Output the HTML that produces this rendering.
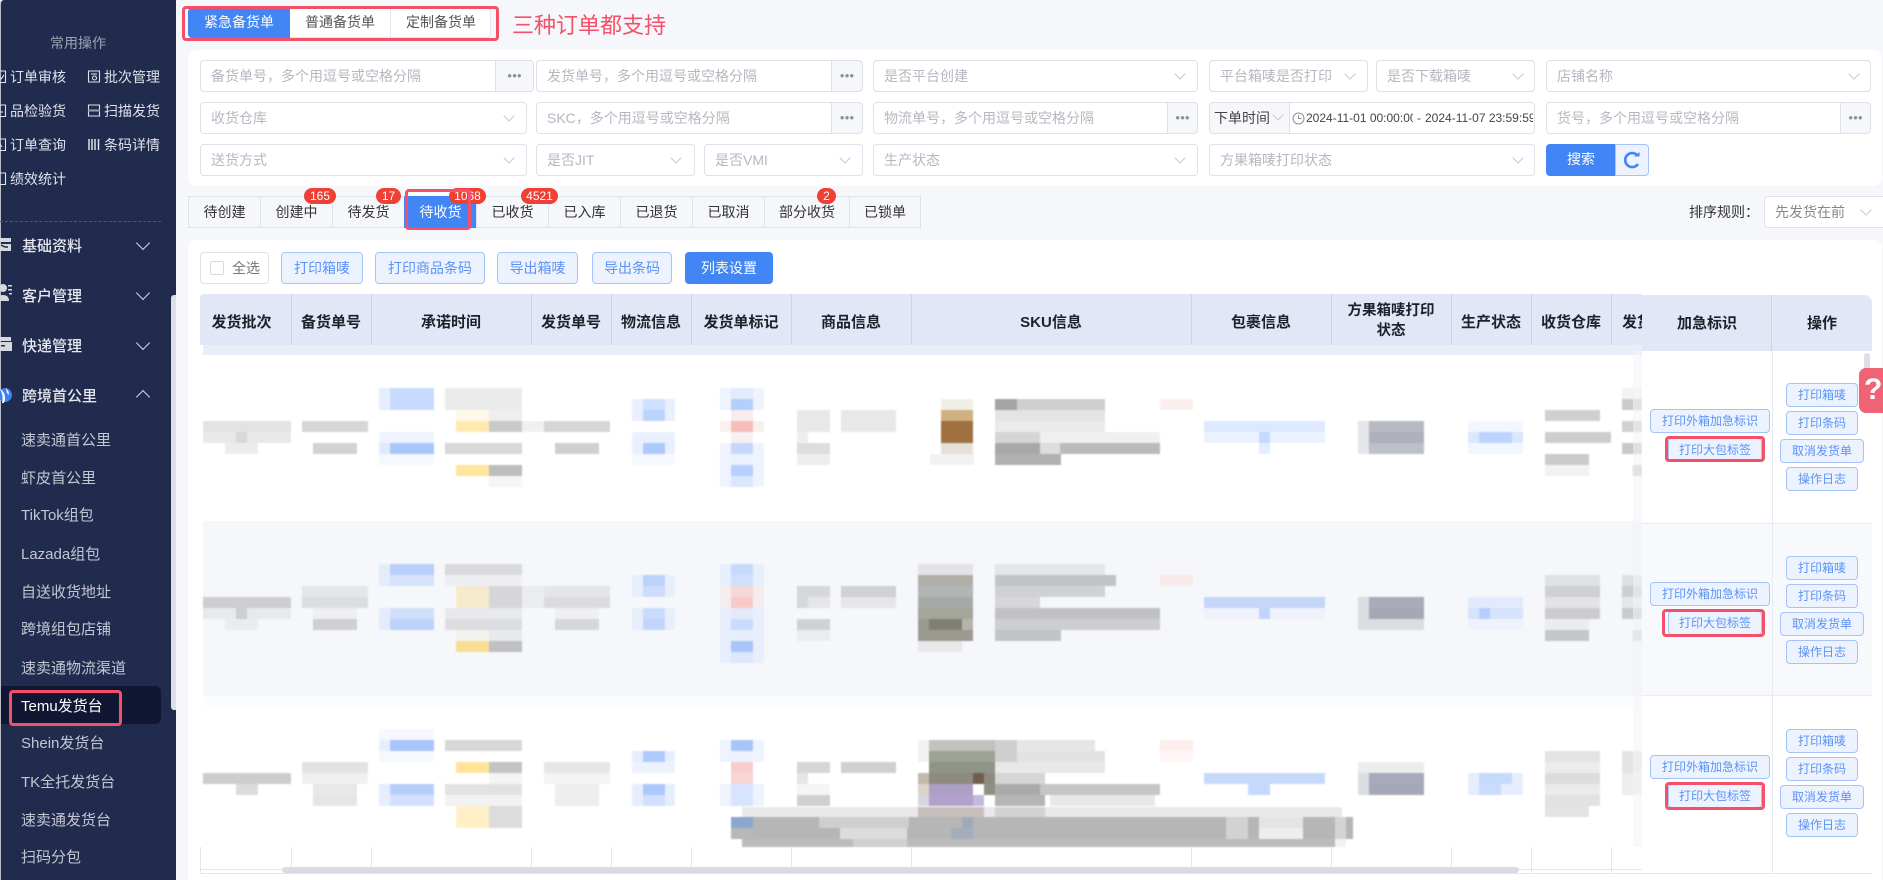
<!DOCTYPE html>
<html lang="zh-CN"><head><meta charset="utf-8"><title>Temu发货台</title>
<style>
*{box-sizing:border-box}
html,body{margin:0;padding:0;width:1883px;height:880px;overflow:hidden;background:#f5f7fb;font-family:"Liberation Sans","Noto Sans CJK SC",sans-serif;font-size:14px;color:#333}
.a,.i,.d,.b,.t,.h,.s,.m,.badge,.red,.ph{position:absolute}
.s{left:21px;width:140px;height:30px;line-height:30px;font-size:15px;color:#c3c7d2;white-space:nowrap}
.m{left:22px;height:24px;line-height:24px;font-size:15px;color:#e6e8ee;white-space:nowrap;font-weight:500}
.q{position:absolute;height:22px;line-height:22px;font-size:14px;color:#dfe2ea;white-space:nowrap}
.ch{position:absolute;width:8px;height:8px;border-right:1px solid #c5c8cf;border-bottom:1px solid #c5c8cf;transform:rotate(45deg)}
.mch{position:absolute;left:138px;width:10px;height:10px;border-right:1.4px solid #d6d9e2;border-bottom:1.4px solid #d6d9e2;transform:rotate(45deg)}
.i{height:32px;background:#fff;border:1px solid #dfe1ea;border-radius:4px;line-height:30px;padding-left:10px;color:#b5b8c0;white-space:nowrap;overflow:hidden}
.d{height:32px;width:32px;background:#f5f7fb;border:1px solid #dfe1ea;border-radius:0 4px 4px 0;text-align:center;line-height:29px;color:#8b909a;font-size:8px;letter-spacing:0}
.t{top:196px;height:32px;width:73px;background:#f5f7fb;border:1px solid #dfe1ea;line-height:31px;text-align:center;color:#333}
.badge{top:188px;height:16px;line-height:16px;border-radius:8px;background:#ee4035;color:#fff;font-size:12px;text-align:center;font-weight:500}
.b{text-align:center;background:#ecf2fe;border:1px solid #a5c3f9;border-radius:4px;color:#5b94f6;white-space:nowrap}
.tb{top:252px;height:32px;line-height:30px;font-size:14px}
.r{height:24px;line-height:22px;font-size:12px}
.h{top:297px;height:51px;line-height:51px;font-size:15px;font-weight:700;color:#1d2129;text-align:center;white-space:nowrap}
.sep{position:absolute;width:1px;background:#ccd3e6}
.red{border:3px solid #f4506a;border-radius:4px}
.cl{position:absolute;top:847px;height:26px;width:1px;background:#e4e6ed}
</style></head><body>

<!-- main panels -->
<div class="a" style="left:188px;top:50px;width:1694px;height:136px;background:#fff;border-radius:8px"></div>
<div class="a" style="left:188px;top:240px;width:1694px;height:640px;background:#fff;border-radius:8px 8px 0 0"></div>

<!-- order type tabs -->
<div class="a" style="left:188px;top:8px;width:303px;height:30px;background:#fff;border:1px solid #e3e6ee;border-radius:4px"></div>
<div class="a" style="left:188px;top:8px;width:102px;height:30px;background:#4285f4;color:#fff;text-align:center;line-height:29px;border-radius:4px 0 0 4px">紧急备货单</div>
<div class="a" style="left:290px;top:8px;width:101px;height:30px;text-align:center;line-height:29px;border-right:1px solid #e3e6ee;color:#555">普通备货单</div>
<div class="a" style="left:391px;top:8px;width:100px;height:30px;text-align:center;line-height:29px;color:#555">定制备货单</div>
<div class="red" style="left:182px;top:6px;width:317px;height:35px"></div>
<div class="a" style="left:512px;top:10px;height:32px;line-height:32px;font-size:22px;color:#f4506a;white-space:nowrap">三种订单都支持</div>

<!-- filters row 1 -->
<div class="i" style="left:200px;top:60px;width:296px;border-radius:4px 0 0 4px">备货单号，多个用逗号或空格分隔</div><div class="d" style="left:495px;top:60px;width:39px">●●●</div>
<div class="i" style="left:536px;top:60px;width:296px;border-radius:4px 0 0 4px">发货单号，多个用逗号或空格分隔</div><div class="d" style="left:831px;top:60px">●●●</div>
<div class="i" style="left:873px;top:60px;width:325px">是否平台创建</div><span class="ch" style="left:1176px;top:70px"></span>
<div class="i" style="left:1209px;top:60px;width:159px">平台箱唛是否打印</div><span class="ch" style="left:1346px;top:70px"></span>
<div class="i" style="left:1376px;top:60px;width:159px">是否下载箱唛</div><span class="ch" style="left:1514px;top:70px"></span>
<div class="i" style="left:1546px;top:60px;width:325px">店铺名称</div><span class="ch" style="left:1850px;top:70px"></span>
<!-- filters row 2 -->
<div class="i" style="left:200px;top:102px;width:327px">收货仓库</div><span class="ch" style="left:505px;top:112px"></span>
<div class="i" style="left:536px;top:102px;width:296px;border-radius:4px 0 0 4px">SKC，多个用逗号或空格分隔</div><div class="d" style="left:831px;top:102px">●●●</div>
<div class="i" style="left:873px;top:102px;width:295px;border-radius:4px 0 0 4px">物流单号，多个用逗号或空格分隔</div><div class="d" style="left:1167px;top:102px;width:31px">●●●</div>
<div class="i" style="left:1209px;top:102px;width:326px"></div>
<div class="a" style="left:1209px;top:102px;width:81px;height:32px;background:#f5f7fb;border:1px solid #dfe1ea;border-radius:4px 0 0 4px;line-height:30px;padding-left:4px;color:#444;white-space:nowrap">下单时间</div><span class="ch" style="left:1274px;top:111px"></span>
<svg class="a" style="left:1292px;top:112px" width="13" height="13" viewBox="0 0 13 13" fill="none" stroke="#8c8f96"><circle cx="6.5" cy="6.5" r="5.5"/><path d="M6.5 3v3.5h3"/></svg>
<div class="a" style="left:1306px;top:102px;width:107px;height:32px;line-height:32px;font-size:12px;color:#444;overflow:hidden;white-space:nowrap">2024-11-01 00:00:00</div>
<div class="a" style="left:1417px;top:102px;height:32px;line-height:33px;font-size:12px;color:#444">-</div>
<div class="a" style="left:1425px;top:102px;width:108px;height:32px;line-height:32px;font-size:12px;color:#444;overflow:hidden;white-space:nowrap">2024-11-07 23:59:59</div>
<div class="i" style="left:1546px;top:102px;width:295px;border-radius:4px 0 0 4px">货号，多个用逗号或空格分隔</div><div class="d" style="left:1840px;top:102px;width:31px">●●●</div>
<!-- filters row 3 -->
<div class="i" style="left:200px;top:144px;width:327px">送货方式</div><span class="ch" style="left:505px;top:154px"></span>
<div class="i" style="left:536px;top:144px;width:159px">是否JIT</div><span class="ch" style="left:672px;top:154px"></span>
<div class="i" style="left:704px;top:144px;width:159px">是否VMI</div><span class="ch" style="left:841px;top:154px"></span>
<div class="i" style="left:873px;top:144px;width:325px">生产状态</div><span class="ch" style="left:1176px;top:154px"></span>
<div class="i" style="left:1209px;top:144px;width:326px">方果箱唛打印状态</div><span class="ch" style="left:1514px;top:154px"></span>
<div class="a" style="left:1546px;top:144px;width:70px;height:32px;background:#4285f4;color:#fff;text-align:center;line-height:31px;border-radius:4px 0 0 4px">搜索</div>
<div class="a" style="left:1615px;top:144px;width:34px;height:32px;background:#ecf2fe;border:1px solid #a5c3f9;border-radius:0 4px 4px 0"></div>
<svg class="a" style="left:1623px;top:151px" width="18" height="18" viewBox="0 0 18 18" fill="none"><path d="M14.5 4.500A7 7 0 1 0 15 13" stroke="#4285f4" stroke-width="2.600"/><path d="M11 5.500h5.500V1z" fill="#4285f4"/></svg>

<!-- status tabs -->
<div class="a" style="left:405px;top:190px;width:66px;height:7px;background:#fff"></div>
<div class="t" style="left:188px">待创建</div>
<div class="t" style="left:260px">创建中</div>
<div class="t" style="left:332px">待发货</div>
<div class="t" style="left:404px;background:#4285f4;color:#fff;border-color:#4285f4">待收货</div>
<div class="t" style="left:476px">已收货</div>
<div class="t" style="left:548px">已入库</div>
<div class="t" style="left:620px">已退货</div>
<div class="t" style="left:692px">已取消</div>
<div class="t" style="left:764px;width:86px">部分收货</div>
<div class="t" style="left:849px;width:72px">已锁单</div>
<div class="badge" style="left:304px;width:32px">165</div>
<div class="badge" style="left:376px;width:25px">17</div>
<div class="badge" style="left:449px;width:37px">1068</div>
<div class="badge" style="left:521px;width:37px">4521</div>
<div class="badge" style="left:817px;width:19px">2</div>
<div class="red" style="left:405px;top:189px;width:66px;height:41px"></div>
<div class="a" style="left:1689px;top:200px;height:24px;line-height:24px;font-size:14px;color:#333;white-space:nowrap">排序规则：</div>
<div class="i" style="left:1764px;top:196px;width:125px;color:#888">先发货在前</div><span class="ch" style="left:1862px;top:206px"></span>

<!-- toolbar -->
<div class="a" style="left:200px;top:252px;width:69px;height:32px;background:#fff;border:1px solid #dfe1ea;border-radius:4px"></div>
<div class="a" style="left:210px;top:261px;width:14px;height:14px;background:#fff;border:1px solid #d8dae2;border-radius:2px"></div>
<div class="a" style="left:232px;top:252px;height:32px;line-height:32px;color:#777">全选</div>
<div class="b tb" style="left:281px;width:82px">打印箱唛</div>
<div class="b tb" style="left:375px;width:110px">打印商品条码</div>
<div class="b tb" style="left:497px;width:81px">导出箱唛</div>
<div class="b tb" style="left:592px;width:80px">导出条码</div>
<div class="b tb" style="left:685px;width:88px;background:#4285f4;border-color:#4285f4;color:#fff">列表设置</div>

<!-- table header -->
<div class="a" style="left:200px;top:294px;width:1442px;height:51px;background:#e1e7f7;border-radius:4px 0 0 0"></div>
<div class="a" style="left:203px;top:345px;width:1439px;height:10px;background:#e9eef9"></div>
<div class="a" style="left:203px;top:521px;width:1439px;height:175px;background:#f5f7fb"></div>
<div class="a" style="left:203px;top:696px;width:1439px;height:10px;background:#fbfcfe"></div>
<div class="sep" style="left:291px;top:294px;height:51px"></div><div class="sep" style="left:371px;top:294px;height:51px"></div><div class="sep" style="left:531px;top:294px;height:51px"></div><div class="sep" style="left:611px;top:294px;height:51px"></div><div class="sep" style="left:691px;top:294px;height:51px"></div><div class="sep" style="left:791px;top:294px;height:51px"></div><div class="sep" style="left:911px;top:294px;height:51px"></div><div class="sep" style="left:1191px;top:294px;height:51px"></div><div class="sep" style="left:1331px;top:294px;height:51px"></div><div class="sep" style="left:1451px;top:294px;height:51px"></div><div class="sep" style="left:1531px;top:294px;height:51px"></div><div class="sep" style="left:1611px;top:294px;height:51px"></div>
<div class="h" style="left:200px;width:83px">发货批次</div>
<div class="h" style="left:291px;width:80px">备货单号</div>
<div class="h" style="left:371px;width:160px">承诺时间</div>
<div class="h" style="left:531px;width:80px">发货单号</div>
<div class="h" style="left:611px;width:80px">物流信息</div>
<div class="h" style="left:691px;width:100px">发货单标记</div>
<div class="h" style="left:791px;width:120px">商品信息</div>
<div class="h" style="left:911px;width:280px">SKU信息</div>
<div class="h" style="left:1191px;width:140px">包裹信息</div>
<div class="h" style="left:1331px;width:120px;line-height:20px;padding-top:4px;white-space:normal;font-size:14.500px">方果箱唛打印<br>状态</div>
<div class="h" style="left:1451px;width:80px">生产状态</div>
<div class="h" style="left:1531px;width:80px">收货仓库</div>
<div class="h" style="left:1622px;width:20px;overflow:hidden;text-align:left">发货</div>

<!-- blurred table content -->
<svg class="a" style="left:0;top:0;filter:blur(.7px)" width="1883" height="880" viewBox="0 0 1883 880" shape-rendering="crispEdges">
<g id="r1">
<path fill="#e2e3e4" d="M203 421h88v11h-88z"/><path fill="#e9e9e9" d="M203 432h88v11h-88z"/><path fill="#d8d8d8" d="M236 432h11v11h-11z"/><path fill="#ececec" d="M225 443h33v11h-33z"/>
<path fill="#d5d6d7" d="M302 421h66v11h-66z"/><path fill="#d2d2d2" d="M313 443h44v11h-44z"/>
<path fill="#e6eefe" d="M379 388h11v22h-11z"/><path fill="#c8daff" d="M390 388h44v22h-44z"/><path fill="#eef3fe" d="M379 432h55v11h-55z"/><path fill="#dfe9fd" d="M379 443h11v11h-11z"/><path fill="#a9c6fa" d="M390 443h44v11h-44z"/><path fill="#f5f8ff" d="M379 454h55v11h-55z"/>
<path fill="#ebebeb" d="M445 388h77v22h-77z"/><path fill="#fff9ea" d="M456 410h33v11h-33z"/><path fill="#eeeeee" d="M489 410h33v11h-33z"/><path fill="#ffe9b0" d="M456 421h33v11h-33z"/><path fill="#c9c9c9" d="M489 421h33v11h-33z"/><path fill="#f0f0f0" d="M522 421h22v11h-22z"/><path fill="#d8d8d8" d="M445 443h77v11h-77z"/><path fill="#ffe69e" d="M456 465h33v11h-33z"/><path fill="#bdbdbd" d="M489 465h33v11h-33z"/><path fill="#f5f5f5" d="M489 476h33v11h-33z"/>
<path fill="#d6d6d6" d="M544 421h66v11h-66z"/><path fill="#cfcfcf" d="M555 443h44v11h-44z"/>
<path fill="#e8effe" d="M632 399h43v22h-43zM632 443h43v11h-43z"/><path fill="#d0e0ff" d="M643 399h22v11h-22z"/><path fill="#bcd4fd" d="M643 410h22v11h-22z"/><path fill="#e9f0fe" d="M632 432h43v11h-43z"/><path fill="#adc9fb" d="M643 443h22v11h-22z"/><path fill="#f5f8ff" d="M632 454h43v11h-43z"/>
<path fill="#eef3fe" d="M720 388h44v22h-44zM720 443h44v44h-44z"/><path fill="#e2ebfd" d="M731 388h22v11h-22z"/><path fill="#b5cefa" d="M731 399h22v11h-22z"/><path fill="#f8ecef" d="M731 410h22v11h-22z"/><path fill="#fbf0f0" d="M720 421h44v11h-44z"/><path fill="#f6bdb9" d="M731 421h22v11h-22z"/><path fill="#f7f0f3" d="M731 432h22v11h-22z"/><path fill="#c5d8fb" d="M731 443h22v11h-22z"/><path fill="#eaf2fe" d="M731 454h22v11h-22z"/><path fill="#b7cffb" d="M731 465h22v11h-22z"/><path fill="#dae6fe" d="M731 476h22v11h-22z"/>
<path fill="#e8e8e8" d="M797 410h33v22h-33zM841 410h55v22h-55z"/><path fill="#eeeeee" d="M797 432h11v11h-11zM797 454h33v11h-33z"/><path fill="#dddddd" d="M797 443h33v11h-33z"/>
<path fill="#f0efe6" d="M941 399h32v11h-32z"/><path fill="#d0b080" d="M941 410h32v11h-32z"/><path fill="#a07040" d="M941 421h32v22h-32z"/><path fill="#e5e0da" d="M941 443h32v11h-32z"/><path fill="#f2f2f0" d="M930 454h44v11h-44z"/>
<path fill="#cfcfcf" d="M995 399h110v11h-110z"/><path fill="#a4a4a4" d="M995 399h22v11h-22z"/><path fill="#e4e4e4" d="M995 410h110v11h-110z"/><path fill="#ebebeb" d="M995 421h110v11h-110z"/><path fill="#d5d5d5" d="M995 432h45v11h-45z"/><path fill="#f0f0f0" d="M1040 432h120v11h-120z"/><path fill="#a8a8a8" d="M995 443h45v11h-45z"/><path fill="#bbbbbb" d="M1060 443h100v11h-100z"/><path fill="#dddddd" d="M1040 443h20v11h-20z"/><path fill="#b0b0b0" d="M995 454h66v11h-66z"/>
<path fill="#fdeeee" d="M1160 399h33v11h-33z"/>
<path fill="#dde9ff" d="M1204 421h121v11h-121z"/><path fill="#eaf2ff" d="M1204 432h121v11h-121z"/><path fill="#c5d9fd" d="M1259 432h11v11h-11z"/><path fill="#e3edfe" d="M1259 443h11v11h-11z"/>
<path fill="#b7bac3" d="M1369 421h55v11h-55z"/><path fill="#adb0bd" d="M1369 432h55v11h-55z"/><path fill="#bcc0c8" d="M1369 443h55v11h-55z"/><path fill="#e4e5e8" d="M1358 421h11v33h-11z"/>
<path fill="#f2f6fe" d="M1468 421h55v11h-55zM1468 443h55v11h-55z"/><path fill="#dbe7fd" d="M1468 432h55v11h-55z"/><path fill="#bdd3fb" d="M1479 432h33v11h-33z"/>
<path fill="#cfcfcf" d="M1545 410h55v11h-55z"/><path fill="#cdcdcd" d="M1545 432h66v11h-66z"/><path fill="#cccccc" d="M1545 454h44v11h-44z"/><path fill="#f2f2f2" d="M1545 465h44v11h-44z"/>
<path fill="#f3f3f3" d="M1622 388h20v11h-20z"/><path fill="#cccccc" d="M1622 399h20v11h-20z"/><path fill="#d0d0d0" d="M1622 421h20v11h-20z"/><path fill="#c8c8c8" d="M1622 443h20v11h-20z"/><path fill="#cccccc" d="M1633 465h9v11h-9z"/>
</g>
<g id="r2">
<path fill="#cdced2" d="M203 597h88v11h-88z"/><path fill="#e8e9ec" d="M203 608h88v11h-88z"/><path fill="#ccced2" d="M236 608h11v11h-11z"/><path fill="#ebecef" d="M225 619h33v11h-33z"/>
<path fill="#e5e6ea" d="M302 586h66v11h-66z"/><path fill="#dcdde1" d="M302 597h66v11h-66z"/><path fill="#eeeff2" d="M313 608h44v11h-44z"/><path fill="#cfd0d4" d="M313 619h44v11h-44z"/>
<path fill="#e4ecfb" d="M379 564h11v22h-11zM379 608h11v22h-11z"/><path fill="#b8cffa" d="M390 564h44v11h-44z"/><path fill="#d6e3fb" d="M390 575h44v11h-44z"/><path fill="#d0dffa" d="M390 608h44v11h-44z"/><path fill="#bcd2fb" d="M390 619h44v11h-44z"/>
<path fill="#d8d9dd" d="M445 564h77v11h-77z"/><path fill="#eeeff2" d="M445 575h77v11h-77z"/><path fill="#f5ebcc" d="M456 586h33v22h-33z"/><path fill="#d5d6da" d="M489 586h33v22h-33z"/><path fill="#ebecef" d="M522 586h22v22h-22z"/><path fill="#e8e9ec" d="M445 608h77v11h-77z"/><path fill="#dcdde1" d="M445 619h77v11h-77z"/><path fill="#f2f3ee" d="M456 630h33v11h-33z"/><path fill="#e8e9ec" d="M489 630h33v11h-33z"/><path fill="#f8dd93" d="M456 641h33v11h-33z"/><path fill="#bfc0c4" d="M489 641h33v11h-33z"/>
<path fill="#e4e5e9" d="M544 586h66v11h-66z"/><path fill="#dadbdf" d="M544 597h66v11h-66z"/><path fill="#eeeff2" d="M555 608h44v11h-44z"/><path fill="#d6d7db" d="M555 619h44v11h-44z"/>
<path fill="#e8effc" d="M632 575h43v22h-43zM632 608h43v22h-43z"/><path fill="#bcd2fb" d="M643 575h22v11h-22z"/><path fill="#cddcfb" d="M643 586h22v11h-22z"/><path fill="#cadcfb" d="M643 608h22v11h-22z"/><path fill="#c2d6fb" d="M643 619h22v11h-22z"/>
<path fill="#e8eefb" d="M720 564h44v22h-44zM720 608h44v55h-44z"/><path fill="#f5ecee" d="M720 586h44v22h-44z"/><path fill="#c8dafb" d="M731 564h22v11h-22z"/><path fill="#d0dffb" d="M731 575h22v11h-22z"/><path fill="#f6d7d7" d="M731 586h22v11h-22z"/><path fill="#f7c9c9" d="M731 597h22v11h-22z"/><path fill="#e4eafa" d="M731 608h22v11h-22z"/><path fill="#cadcfb" d="M731 619h22v11h-22z"/><path fill="#e6eefb" d="M731 630h22v11h-22z"/><path fill="#a9c5fa" d="M731 641h22v11h-22z"/><path fill="#dce7fb" d="M731 652h22v11h-22z"/>
<path fill="#d6d7db" d="M797 586h33v11h-33zM797 597h11v11h-11z"/><path fill="#e5e6e9" d="M808 597h22v11h-22z"/><path fill="#d0d1d5" d="M841 586h55v11h-55z"/><path fill="#e5e6e9" d="M841 597h55v11h-55z"/><path fill="#d0d1d5" d="M797 619h33v11h-33z"/><path fill="#ebecef" d="M797 630h33v11h-33z"/>
<path fill="#e2e3e6" d="M918 564h55v11h-55z"/><path fill="#b0afa8" d="M918 575h55v11h-55z"/><path fill="#b0b5b5" d="M918 586h55v11h-55z"/><path fill="#a6aaa6" d="M918 597h55v11h-55z"/><path fill="#a5a59a" d="M918 608h55v11h-55z"/><path fill="#7f7f75" d="M929 619h33v11h-33z"/><path fill="#9b9a90" d="M918 619h11v22h-11zM929 630h44v11h-44z"/><path fill="#b5b3aa" d="M962 619h11v11h-11z"/><path fill="#e8e8ea" d="M918 641h44v11h-44z"/>
<path fill="#e5e6e8" d="M995 564h110v11h-110z"/><path fill="#c2c3c8" d="M995 575h121v11h-121z"/><path fill="#d0d1d5" d="M995 586h110v11h-110z"/><path fill="#d6d7db" d="M995 597h45v11h-45z"/><path fill="#c0c1c5" d="M995 608h165v11h-165z"/><path fill="#cdced2" d="M995 619h165v11h-165z"/><path fill="#c2c3c7" d="M995 630h66v11h-66z"/>
<path fill="#f8e9ea" d="M1160 575h33v11h-33z"/>
<path fill="#c5d6f9" d="M1204 597h121v11h-121z"/><path fill="#eef2fb" d="M1204 608h121v11h-121z"/><path fill="#c0d4fb" d="M1259 608h11v11h-11z"/>
<path fill="#dcdde1" d="M1358 597h11v22h-11zM1358 619h66v11h-66z"/><path fill="#a7abba" d="M1369 597h55v11h-55z"/><path fill="#a5a8b6" d="M1369 608h55v11h-55z"/>
<path fill="#e2ebfb" d="M1468 597h55v11h-55z"/><path fill="#d6e3fb" d="M1468 608h55v11h-55z"/><path fill="#b6cefb" d="M1479 608h11v11h-11z"/><path fill="#eef2fb" d="M1468 619h55v11h-55z"/>
<path fill="#dfe1e4" d="M1545 575h55v11h-55z"/><path fill="#cfd0d4" d="M1545 586h55v11h-55z"/><path fill="#e2e3e7" d="M1545 597h55v11h-55z"/><path fill="#cbccd0" d="M1545 608h55v11h-55z"/><path fill="#ebecef" d="M1545 619h44v11h-44z"/><path fill="#c5c6ca" d="M1545 630h44v11h-44z"/>
<path fill="#dfe0e3" d="M1622 575h20v11h-20z"/><path fill="#ccced1" d="M1622 586h20v11h-20z"/><path fill="#e5e6e9" d="M1622 597h20v11h-20z"/><path fill="#c9cacf" d="M1622 608h20v11h-20z"/><path fill="#d4d5d8" d="M1633 630h9v11h-9z"/>
</g>
<g id="r3">
<path fill="#cdcdcd" d="M203 773h88v11h-88z"/><path fill="#dcdcdc" d="M236 784h22v11h-22z"/>
<path fill="#e2e2e2" d="M302 762h66v11h-66z"/><path fill="#f0f0f0" d="M302 773h66v11h-66z"/><path fill="#e8e8e8" d="M313 784h44v11h-44z"/><path fill="#e5e5e5" d="M313 795h44v11h-44z"/>
<path fill="#f5f8ff" d="M379 729h55v11h-55zM379 751h55v11h-55z"/><path fill="#a9c5fa" d="M390 740h44v11h-44z"/><path fill="#e6eefd" d="M379 740h11v11h-11zM379 784h11v22h-11z"/><path fill="#b6cffa" d="M390 784h44v11h-44z"/><path fill="#d3e1fe" d="M390 795h44v11h-44z"/>
<path fill="#d8d8d8" d="M445 740h77v11h-77z"/><path fill="#ffe49a" d="M456 762h33v11h-33z"/><path fill="#c4c4c4" d="M489 762h33v11h-33z"/><path fill="#e6e6e6" d="M544 762h66v11h-66z"/><path fill="#f4f4f4" d="M489 773h33v11h-33zM544 773h66v11h-66z"/><path fill="#e2e2e2" d="M445 784h77v11h-77z"/><path fill="#f2f2f2" d="M445 795h77v11h-77z"/><path fill="#fff0c8" d="M456 806h33v22h-33z"/><path fill="#dcdcdc" d="M489 806h33v22h-33z"/>
<path fill="#eeeeee" d="M555 784h44v22h-44z"/>
<path fill="#e6eefd" d="M632 751h43v11h-43zM632 784h43v22h-43z"/><path fill="#b0cbfb" d="M643 751h22v11h-22z"/><path fill="#edf2fe" d="M632 762h43v11h-43z"/><path fill="#acc8fb" d="M643 784h22v11h-22z"/><path fill="#d0e0fe" d="M643 795h22v11h-22z"/>
<path fill="#eef3fe" d="M720 740h44v22h-44zM720 784h44v22h-44z"/><path fill="#a8c5fa" d="M731 740h22v11h-22z"/><path fill="#edf2fe" d="M731 751h22v11h-22z"/><path fill="#f9cccc" d="M731 762h22v11h-22z"/><path fill="#f9d6d6" d="M731 773h22v11h-22z"/><path fill="#d6e4fd" d="M731 784h22v22h-22z"/>
<path fill="#d6d6d6" d="M797 762h33v11h-33z"/><path fill="#d0d0d0" d="M841 762h55v11h-55z"/><path fill="#e5e5e5" d="M797 773h11v11h-11z"/><path fill="#f5f5f5" d="M797 784h33v11h-33z"/><path fill="#d0d0d0" d="M797 795h33v11h-33z"/>
<path fill="#f2f2ee" d="M918 740h11v22h-11z"/><path fill="#bfc3bb" d="M929 740h66v11h-66z"/><path fill="#9ca295" d="M929 751h66v11h-66z"/><path fill="#8f9488" d="M929 762h66v11h-66z"/><path fill="#8f8a80" d="M929 773h66v11h-66z"/><path fill="#c2b8ac" d="M918 773h11v11h-11z"/><path fill="#705d50" d="M973 773h11v11h-11z"/><path fill="#ddd3c7" d="M918 784h11v11h-11z"/><path fill="#ab9fc8" d="M929 784h44v11h-44z"/><path fill="#8f9080" d="M984 784h11v11h-11z"/><path fill="#d6d5e0" d="M918 795h11v11h-11z"/><path fill="#b3a0cc" d="M929 795h44v11h-44z"/><path fill="#c0bae0" d="M973 795h11v11h-11z"/>
<path fill="#cfcfcf" d="M995 740h22v22h-22z"/><path fill="#e6e6e6" d="M1017 740h78v11h-78z"/><path fill="#e2e2e2" d="M1017 751h88v11h-88z"/><path fill="#e8e8e8" d="M995 762h110v11h-110z"/><path fill="#d5d5d5" d="M995 773h50v11h-50z"/><path fill="#aaaaaa" d="M995 784h45v11h-45z"/><path fill="#c5c5c5" d="M1040 784h120v11h-120z"/><path fill="#b5b5b5" d="M995 795h50v11h-50z"/><path fill="#e8e8e8" d="M1050 795h105v11h-105z"/>
<path fill="#fdeeec" d="M1160 740h33v11h-33z"/><path fill="#fff5f4" d="M1160 751h33v11h-33z"/>
<path fill="#c6d9fb" d="M1204 773h121v11h-121z"/><path fill="#c5d9fd" d="M1248 784h22v11h-22z"/>
<path fill="#ebecee" d="M1358 762h66v11h-66z"/><path fill="#a6aabb" d="M1369 773h55v11h-55z"/><path fill="#a4a8b8" d="M1369 784h55v11h-55z"/><path fill="#dcdde1" d="M1358 773h11v22h-11z"/>
<path fill="#e6eefd" d="M1468 773h55v22h-55z"/><path fill="#c6dafd" d="M1479 773h33v11h-33z"/><path fill="#cadcfd" d="M1479 784h22v11h-22z"/>
<path fill="#e3e3e3" d="M1545 751h55v11h-55z"/><path fill="#ececec" d="M1545 762h55v11h-55z"/><path fill="#dcdcdc" d="M1545 773h55v11h-55z"/><path fill="#ebebeb" d="M1545 784h55v11h-55z"/><path fill="#e2e2e2" d="M1545 795h55v11h-55z"/><path fill="#e3e3e3" d="M1545 806h44v11h-44z"/>
<path fill="#e4e4e4" d="M1622 751h20v22h-20z"/><path fill="#eeeeee" d="M1622 773h20v22h-20z"/>
</g>
<!-- bottom overlay tooltip -->
<path fill="#e9e9e9" d="M742 807h600v10h-600z"/>
<path fill="#c6bfbd" d="M918 807h66v10h-66z"/><path fill="#d3d3d3" d="M995 807h50v10h-50z"/>
<path fill="#8ba7cf" d="M731 817h22v11h-22z"/>
<path fill="#b6b6b6" d="M753 817h600v22h-600z"/><path fill="#b8b8b8" d="M731 828h22v11h-22z"/>
<path fill="#bbbbbb" d="M742 839h600v8h-600z"/>
<path fill="#cfcfcf" d="M819 817h90v11h-90z"/><path fill="#dcdcdc" d="M840 828h67v11h-67z"/><path fill="#cfd0d0" d="M853 839h54v8h-54z"/>
<path fill="#a6adba" d="M951 828h22v11h-22z"/><path fill="#a0a9b8" d="M962 817h11v11h-11z"/>
<path fill="#e4e4e4" d="M1259 817h44v11h-44z"/><path fill="#eeeeee" d="M1259 828h44v11h-44z"/><path fill="#d2d2d2" d="M1226 817h22v22h-22z"/><path fill="#d4d4d4" d="M1335 817h11v22h-11z"/><path fill="#f2f2f2" d="M1335 839h11v8h-11z"/>
</svg>

<div class="cl" style="left:200px"></div><div class="cl" style="left:291px"></div><div class="cl" style="left:371px"></div><div class="cl" style="left:531px"></div><div class="cl" style="left:611px"></div><div class="cl" style="left:691px"></div><div class="cl" style="left:791px"></div><div class="cl" style="left:911px"></div><div class="cl" style="left:1191px"></div><div class="cl" style="left:1331px"></div><div class="cl" style="left:1451px"></div><div class="cl" style="left:1531px"></div><div class="cl" style="left:1611px"></div>
<div class="a" style="left:200px;top:869px;width:1442px;height:1px;background:#e4e6ed"></div>
<div class="a" style="left:200px;top:873px;width:1672px;height:1px;background:#e4e6ed"></div>
<div class="a" style="left:282px;top:867px;width:1237px;height:6px;background:#d9dce4;border-radius:3px"></div>

<!-- fixed right columns -->
<div class="a" style="left:1633px;top:351px;width:9px;height:496px;background:#f3f4f7;opacity:.55"></div>
<div class="a" style="left:1642px;top:295px;width:230px;height:578px;background:#fff"></div>
<div class="a" style="left:1642px;top:295px;width:230px;height:56px;background:#e1e7f7;border-radius:0 8px 0 0"></div>
<div class="a" style="left:1642px;top:523px;width:230px;height:173px;background:#f7f9fc;border-top:1px solid #e9ecf3;border-bottom:1px solid #e9ecf3"></div>
<div class="a" style="left:1772px;top:295px;width:1px;height:578px;background:#e8eaf2"></div>
<div class="a" style="left:1771px;top:295px;width:1px;height:56px;background:#ccd3e6"></div>
<div class="h" style="left:1642px;top:298px;width:130px">加急标识</div>
<div class="h" style="left:1772px;top:298px;width:100px">操作</div>
<div class="a" style="left:1864px;top:353px;width:6px;height:30px;background:#dcdfe6;border-radius:3px"></div>

<div class="b r" style="left:1650px;top:409px;width:120px">打印外箱加急标识</div>
<div class="b r" style="left:1668px;top:438px;width:94px">打印大包标签</div>
<div class="red" style="left:1665px;top:436px;width:100px;height:26px"></div>
<div class="b r" style="left:1786px;top:383px;width:72px">打印箱唛</div>
<div class="b r" style="left:1786px;top:411px;width:72px">打印条码</div>
<div class="b r" style="left:1780px;top:439px;width:84px">取消发货单</div>
<div class="b r" style="left:1786px;top:467px;width:72px">操作日志</div>

<div class="b r" style="left:1650px;top:582px;width:120px">打印外箱加急标识</div>
<div class="b r" style="left:1668px;top:611px;width:94px">打印大包标签</div>
<div class="red" style="left:1662px;top:609px;width:103px;height:28px"></div>
<div class="b r" style="left:1786px;top:556px;width:72px">打印箱唛</div>
<div class="b r" style="left:1786px;top:584px;width:72px">打印条码</div>
<div class="b r" style="left:1780px;top:612px;width:84px">取消发货单</div>
<div class="b r" style="left:1786px;top:640px;width:72px">操作日志</div>

<div class="b r" style="left:1650px;top:755px;width:120px">打印外箱加急标识</div>
<div class="b r" style="left:1668px;top:784px;width:94px">打印大包标签</div>
<div class="red" style="left:1665px;top:782px;width:100px;height:28px"></div>
<div class="b r" style="left:1786px;top:729px;width:72px">打印箱唛</div>
<div class="b r" style="left:1786px;top:757px;width:72px">打印条码</div>
<div class="b r" style="left:1780px;top:785px;width:84px">取消发货单</div>
<div class="b r" style="left:1786px;top:813px;width:72px">操作日志</div>

<!-- help tab -->
<div class="a" style="left:1859px;top:368px;width:24px;height:45px;background:#f06375;border-radius:7px 0 0 7px;color:#fff;font-size:30px;font-weight:700;line-height:44px;padding-left:5px;overflow:hidden">?</div>

<!-- sidebar -->
<div class="a" style="left:0;top:0;width:176px;height:880px;background:#202b4e;border-radius:4px 0 0 0;border-left:1px solid #b9bcc4"></div>
<div class="a" style="left:50px;top:32px;height:22px;line-height:22px;font-size:14px;color:#9da2b2;white-space:nowrap">常用操作</div>
<div class="q" style="left:10px;top:66px">订单审核</div><div class="q" style="left:104px;top:66px">批次管理</div>
<div class="q" style="left:10px;top:100px">品检验货</div><div class="q" style="left:104px;top:100px">扫描发货</div>
<div class="q" style="left:10px;top:134px">订单查询</div><div class="q" style="left:104px;top:134px">条码详情</div>
<div class="q" style="left:10px;top:168px">绩效统计</div>
<svg class="a" style="left:0;top:68px" width="110" height="130" viewBox="0 0 110 130" fill="none" stroke="#dfe2ea" stroke-width="1.100">
<path d="M-6 3h11.500v11.500h-11.500z"/><path d="M-1 9l2 2 3-4"/>
<path d="M-6 37h11.500v11.500h-11.500z"/><path d="M-1 44h4"/>
<path d="M-6 71h11.500v11.500h-11.500z"/><path d="M-1 75l3 4"/>
<path d="M-6 105h11.500v11.500h-11.500z"/>
<path d="M88.500 3h11v11h-11z"/><path d="M91 6h6"/><circle cx="94.500" cy="10" r="2"/>
<path d="M88.500 37h11v11h-11z"/><path d="M88 42.500h12" stroke="#9aa0b0" stroke-width="2"/>
<path d="M89 71v11M92 71v11M95 71v11M98.500 71v11" stroke-width="1.500"/>
</svg>
<div class="a" style="left:0;top:221px;width:161px;border-top:1px dashed #4d5672"></div>

<div class="m" style="top:235px">基础资料</div><span class="mch" style="top:238px"></span>
<div class="m" style="top:285px">客户管理</div><span class="mch" style="top:288px"></span>
<div class="m" style="top:335px">快递管理</div><span class="mch" style="top:338px"></span>
<div class="m" style="top:385px">跨境首公里</div><span class="mch" style="top:392px;transform:rotate(225deg)"></span>
<svg class="a" style="left:0;top:235px" width="14" height="170" viewBox="0 0 14 170">
<path fill="#d5d8df" d="M-2 3h13v4h-13zM-2 9h13v7h-13z"/><path stroke="#202b4e" stroke-width="1.500" fill="none" d="M1 10l4 2h3"/>
<circle cx="3" cy="53" r="4" fill="#d5d8df"/><path fill="#d5d8df" d="M-3 66q0-6 6-6t6 6zM8 50h4v1.500h-4zM8 54h4v1.500h-4zM9 58h3v1.500h-3z"/>
<path fill="#d5d8df" d="M-2 102h13v4h-13zM-2 107h14v9h-14z"/><path fill="#202b4e" d="M1 110h4v1.500h-4z"/>
<circle cx="5" cy="160" r="7" fill="#3f7ff0"/><path fill="#fff" d="M0 154q5 3 5 9t-3 5q2-7-2-14z"/><path fill="#fff" d="M6 153q3 3 3 7l-2-2z"/>
</svg>
<div class="s" style="top:426px">速卖通首公里</div>
<div class="s" style="top:464px">虾皮首公里</div>
<div class="s" style="top:501px">TikTok组包</div>
<div class="s" style="top:540px">Lazada组包</div>
<div class="s" style="top:578px">自送收货地址</div>
<div class="s" style="top:615px">跨境组包店铺</div>
<div class="s" style="top:654px">速卖通物流渠道</div>
<div class="a" style="left:1px;top:686px;width:160px;height:38px;background:#111733;border-radius:0 5px 5px 0"></div>
<div class="s" style="top:692px;color:#fff">Temu发货台</div>
<div class="red" style="left:9px;top:690px;width:113px;height:36px"></div>
<div class="s" style="top:729px">Shein发货台</div>
<div class="s" style="top:768px">TK全托发货台</div>
<div class="s" style="top:806px">速卖通发货台</div>
<div class="s" style="top:843px">扫码分包</div>
<div class="a" style="left:171px;top:295px;width:5px;height:415px;background:#dcdfe8;border-radius:3px 0 0 3px"></div>
</body></html>
